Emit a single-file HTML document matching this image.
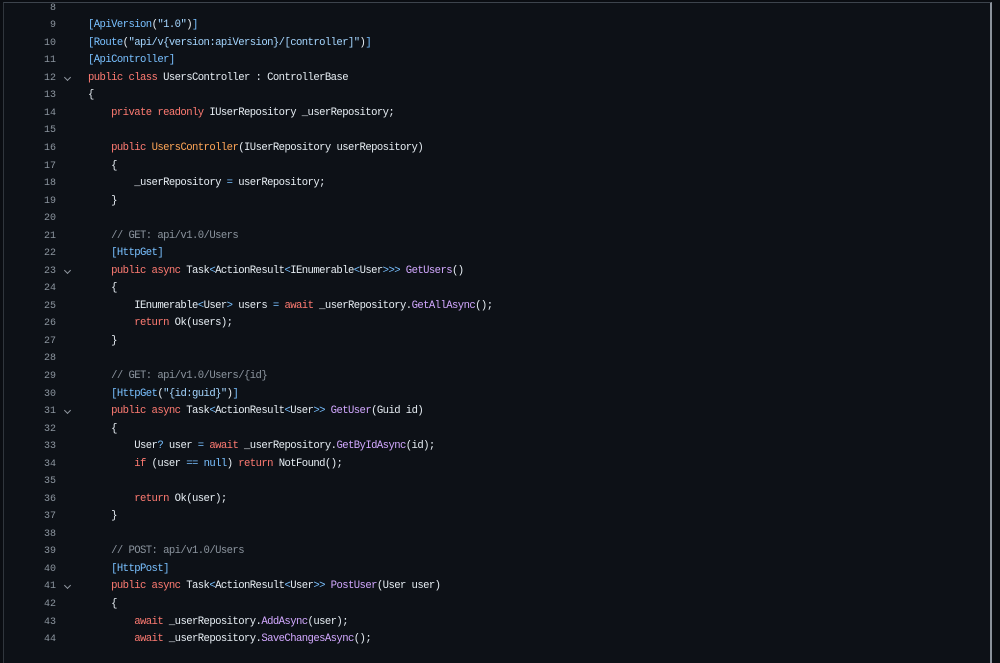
<!DOCTYPE html>
<html><head><meta charset="utf-8"><style>
html,body{margin:0;padding:0;width:1000px;height:648px;overflow:hidden;background:#0a0d12;}
#box{position:absolute;left:3px;top:2px;width:986px;height:660px;background:#0d1117;border-left:1px solid #30363d;border-top:1px solid #3d444d;border-right:2px solid #8b929b;}
.l{position:absolute;left:0;height:17.54px;line-height:17.54px;font-family:"Liberation Mono",monospace;font-size:10.6px;letter-spacing:-0.58px;color:#e6edf3;white-space:pre;width:980px;}
.n{position:absolute;left:0;width:52px;text-align:right;color:#8b949e;letter-spacing:0;font-size:10px;}
.c{position:absolute;left:84px;}
.v{position:absolute;left:61px;top:5px;width:4px;height:4px;border-right:1.2px solid #9198a1;border-bottom:1.2px solid #9198a1;transform:rotate(45deg);}
.k{color:#ff7b72}.a{color:#79c0ff}.s{color:#a5d6ff}.f{color:#d2a8ff}.m{color:#8b949e}.o{color:#ffa657}
</style></head><body><div id="box">
<div class="l" style="top:-3.3px"><span class="n">8</span></div>
<div class="l" style="top:14.2px"><span class="n">9</span><span class="c"><span class="a">[ApiVersion</span>(<span class="s">"1.0"</span>)<span class="a">]</span></span></div>
<div class="l" style="top:31.8px"><span class="n">10</span><span class="c"><span class="a">[Route</span>(<span class="s">"api/v{version:apiVersion}/[controller]"</span>)<span class="a">]</span></span></div>
<div class="l" style="top:49.3px"><span class="n">11</span><span class="c"><span class="a">[ApiController]</span></span></div>
<div class="l" style="top:66.8px"><span class="n">12</span><span class="v"></span><span class="c"><span class="k">public class</span> UsersController : ControllerBase</span></div>
<div class="l" style="top:84.4px"><span class="n">13</span><span class="c">{</span></div>
<div class="l" style="top:101.9px"><span class="n">14</span><span class="c">    <span class="k">private readonly</span> IUserRepository _userRepository;</span></div>
<div class="l" style="top:119.4px"><span class="n">15</span></div>
<div class="l" style="top:137.0px"><span class="n">16</span><span class="c">    <span class="k">public</span> <span class="o">UsersController</span>(IUserRepository userRepository)</span></div>
<div class="l" style="top:154.5px"><span class="n">17</span><span class="c">    {</span></div>
<div class="l" style="top:172.1px"><span class="n">18</span><span class="c">        _userRepository <span class="a">=</span> userRepository;</span></div>
<div class="l" style="top:189.6px"><span class="n">19</span><span class="c">    }</span></div>
<div class="l" style="top:207.1px"><span class="n">20</span></div>
<div class="l" style="top:224.7px"><span class="n">21</span><span class="c">    <span class="m">// GET: api/v1.0/Users</span></span></div>
<div class="l" style="top:242.2px"><span class="n">22</span><span class="c">    <span class="a">[HttpGet]</span></span></div>
<div class="l" style="top:259.7px"><span class="n">23</span><span class="v"></span><span class="c">    <span class="k">public async</span> Task<span class="a">&lt;</span>ActionResult<span class="a">&lt;</span>IEnumerable<span class="a">&lt;</span>User<span class="a">&gt;&gt;&gt;</span> <span class="f">GetUsers</span>()</span></div>
<div class="l" style="top:277.3px"><span class="n">24</span><span class="c">    {</span></div>
<div class="l" style="top:294.8px"><span class="n">25</span><span class="c">        IEnumerable<span class="a">&lt;</span>User<span class="a">&gt;</span> users <span class="a">=</span> <span class="k">await</span> _userRepository.<span class="f">GetAllAsync</span>();</span></div>
<div class="l" style="top:312.4px"><span class="n">26</span><span class="c">        <span class="k">return</span> Ok(users);</span></div>
<div class="l" style="top:329.9px"><span class="n">27</span><span class="c">    }</span></div>
<div class="l" style="top:347.4px"><span class="n">28</span></div>
<div class="l" style="top:365.0px"><span class="n">29</span><span class="c">    <span class="m">// GET: api/v1.0/Users/{id}</span></span></div>
<div class="l" style="top:382.5px"><span class="n">30</span><span class="c">    <span class="a">[HttpGet</span>(<span class="s">"{id:guid}"</span>)<span class="a">]</span></span></div>
<div class="l" style="top:400.0px"><span class="n">31</span><span class="v"></span><span class="c">    <span class="k">public async</span> Task<span class="a">&lt;</span>ActionResult<span class="a">&lt;</span>User<span class="a">&gt;&gt;</span> <span class="f">GetUser</span>(Guid id)</span></div>
<div class="l" style="top:417.6px"><span class="n">32</span><span class="c">    {</span></div>
<div class="l" style="top:435.1px"><span class="n">33</span><span class="c">        User<span class="a">?</span> user <span class="a">=</span> <span class="k">await</span> _userRepository.<span class="f">GetByIdAsync</span>(id);</span></div>
<div class="l" style="top:452.7px"><span class="n">34</span><span class="c">        <span class="k">if</span> (user <span class="a">==</span> <span class="a">null</span>) <span class="k">return</span> NotFound();</span></div>
<div class="l" style="top:470.2px"><span class="n">35</span></div>
<div class="l" style="top:487.7px"><span class="n">36</span><span class="c">        <span class="k">return</span> Ok(user);</span></div>
<div class="l" style="top:505.3px"><span class="n">37</span><span class="c">    }</span></div>
<div class="l" style="top:522.8px"><span class="n">38</span></div>
<div class="l" style="top:540.3px"><span class="n">39</span><span class="c">    <span class="m">// POST: api/v1.0/Users</span></span></div>
<div class="l" style="top:557.9px"><span class="n">40</span><span class="c">    <span class="a">[HttpPost]</span></span></div>
<div class="l" style="top:575.4px"><span class="n">41</span><span class="v"></span><span class="c">    <span class="k">public async</span> Task<span class="a">&lt;</span>ActionResult<span class="a">&lt;</span>User<span class="a">&gt;&gt;</span> <span class="f">PostUser</span>(User user)</span></div>
<div class="l" style="top:593.0px"><span class="n">42</span><span class="c">    {</span></div>
<div class="l" style="top:610.5px"><span class="n">43</span><span class="c">        <span class="k">await</span> _userRepository.<span class="f">AddAsync</span>(user);</span></div>
<div class="l" style="top:628.0px"><span class="n">44</span><span class="c">        <span class="k">await</span> _userRepository.<span class="f">SaveChangesAsync</span>();</span></div>
</div></body></html>
